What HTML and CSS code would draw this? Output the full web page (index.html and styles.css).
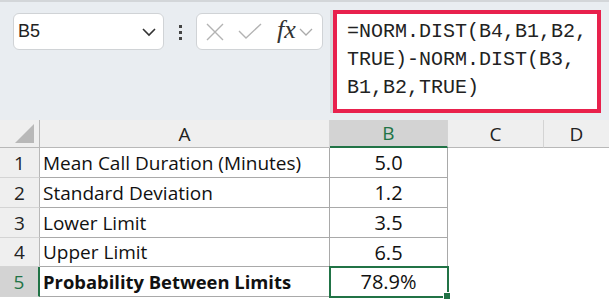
FILE: index.html
```html
<!DOCTYPE html>
<html lang="en">
<head>
    <meta charset="UTF-8">
    <title>NORM.DIST</title>
    <link rel="stylesheet" href="styles.css">
</head>
<body>
    <div class="toolbar">
        <div class="namebox">
            <span>B5</span>
            <svg width="16" height="10" viewBox="0 0 16 10"><path d="M2 2 L8 8 L14 2" fill="none" stroke="#333" stroke-width="1.6"/></svg>
        </div>
        <div class="dots"><i></i><i></i><i></i></div>
        <div class="fxbox">
            <svg class="ico-x" width="20" height="20" viewBox="0 0 20 20"><path d="M2 2 L18 18 M18 2 L2 18" stroke="#b3b3b3" stroke-width="1.4"/></svg>
            <svg class="ico-ok" width="26" height="20" viewBox="0 0 26 20"><path d="M2 9 L9 16 L24 2" fill="none" stroke="#b3b3b3" stroke-width="1.4"/></svg>
            <span class="fx">fx</span>
            <svg width="14" height="10" viewBox="0 0 14 10"><path d="M1 2 L7 8 L13 2" fill="none" stroke="#aaa" stroke-width="1.3"/></svg>
        </div>
        <div class="formula">=NORM.DIST(B4,B1,B2,<br>TRUE)-NORM.DIST(B3,<br>B1,B2,TRUE)</div>
    </div>
    <div class="sheet">
        <div class="head corner"><span class="tri"></span></div>
        <div class="head">A</div>
        <div class="head active-col">B</div>
        <div class="head">C</div>
        <div class="head last">D</div>

        <div class="rownum">1</div>
        <div class="cell label">Mean Call Duration (Minutes)</div>
        <div class="cell num">5.0</div>
        <div class="blank"></div><div class="blank"></div>

        <div class="rownum">2</div>
        <div class="cell label">Standard Deviation</div>
        <div class="cell num">1.2</div>
        <div class="blank"></div><div class="blank"></div>

        <div class="rownum">3</div>
        <div class="cell label">Lower Limit</div>
        <div class="cell num">3.5</div>
        <div class="blank"></div><div class="blank"></div>

        <div class="rownum">4</div>
        <div class="cell label">Upper Limit</div>
        <div class="cell num">6.5</div>
        <div class="blank"></div><div class="blank"></div>

        <div class="rownum active-row">5</div>
        <div class="cell label bold">Probability Between Limits</div>
        <div class="cell num selected">78.9%</div>
        <div class="blank"></div><div class="blank"></div>
    </div>
</body>
</html>
```

FILE: styles.css
```css
body {
    margin: 0;
    width: 609px;
    height: 299px;
    overflow: hidden;
    background-color: #ffffff;
    font-family: "Open Sans", "Noto Sans", sans-serif;
}
.toolbar {
    padding: 8px 8px 0 13px;
    box-sizing: border-box;
    height: 120px;
    background-color: #e9edf1;
    border-top: 2px solid #d3d6d9;
    display: flex;
    align-items: flex-start;
}
.namebox {
    margin-top: 3px;
    width: 151px;
    height: 37px;
    box-sizing: border-box;
    background: #fff;
    border: 1px solid #d0d3d6;
    border-radius: 6px;
    display: flex;
    align-items: center;
    justify-content: space-between;
    padding: 0 6px 0 4px;
    font-family: "Liberation Sans", Arial, sans-serif;
    font-size: 18px;
    color: #222;
}
.dots {
    width: 32px;
    display: flex;
    flex-direction: column;
    align-items: center;
    gap: 3px;
    margin-top: 15px;
}
.dots i {
    width: 3px;
    height: 3px;
    background: #444;
}
.fxbox {
    margin-top: 3px;
    width: 127px;
    height: 37px;
    box-sizing: border-box;
    background: #fff;
    border: 1px solid #d0d3d6;
    border-radius: 6px;
    display: flex;
    align-items: center;
    padding: 0 4px 0 8px;
}
.ico-ok {
    margin-left: 12px;
}
.fx {
    font-family: "Liberation Serif", "DejaVu Serif", serif;
    font-style: italic;
    font-size: 26px;
    color: #333;
    margin-left: 14px;
    margin-right: 3px;
    margin-top: -4px;
}
.formula {
    margin-left: 10px;
    width: 268px;
    height: 103px;
    box-sizing: border-box;
    background: #fff;
    border: 4px solid #e8214d;
    box-shadow: -3px 0 0 #d6d9dc;
    padding: 4px 0 0 10px;
    font-family: "Liberation Mono", "DejaVu Sans Mono", monospace;
    font-size: 20px;
    line-height: 28px;
    color: #222;
}
.sheet {
    display: grid;
    grid-template-columns: 40px 290px 118px 96px 65px;
    grid-template-rows: 28px 30px 30px 30px 29px 30px;
    font-size: 19px;
    color: #111;
}
.head {
    background: #efefef;
    border-bottom: 1px solid #b8b8b8;
    border-right: 1px solid #d4d4d4;
    display: flex;
    align-items: center;
    justify-content: center;
    color: #222;
}
.head.last {
    border-right: none;
}
.corner {
    border-right: 1px solid #b8b8b8;
    position: relative;
}
.tri {
    position: absolute;
    right: 5px;
    bottom: 4px;
    width: 0;
    height: 0;
    border-left: 19px solid transparent;
    border-bottom: 19px solid #b8b8b8;
}
.active-col {
    background: #d3d3d3;
    color: #217346;
    border-bottom: 2px solid #217346;
}
.rownum {
    background: #efefef;
    border-right: 1px solid #b8b8b8;
    border-bottom: 1px solid #d4d4d4;
    display: flex;
    align-items: center;
    justify-content: center;
    color: #222;
}
.active-row {
    background: #d3d3d3;
    color: #217346;
    border-right: 2px solid #217346;
}
.cell {
    border-right: 1px solid #a9a9a9;
    border-bottom: 1px solid #a9a9a9;
    display: flex;
    align-items: center;
    white-space: nowrap;
}
.label {
    padding-left: 3px;
}
.bold {
    font-weight: bold;
    font-size: 18.4px;
}
.num {
    justify-content: center;
    font-size: 20px;
}
.selected {
    position: relative;
    outline: 2px solid #217346;
    outline-offset: -1px;
}
.selected::after {
    content: "";
    position: absolute;
    right: -4px;
    bottom: -4px;
    width: 6px;
    height: 6px;
    background: #217346;
    border: 1px solid #fff;
}
.blank {
    background: #fff;
}
```
